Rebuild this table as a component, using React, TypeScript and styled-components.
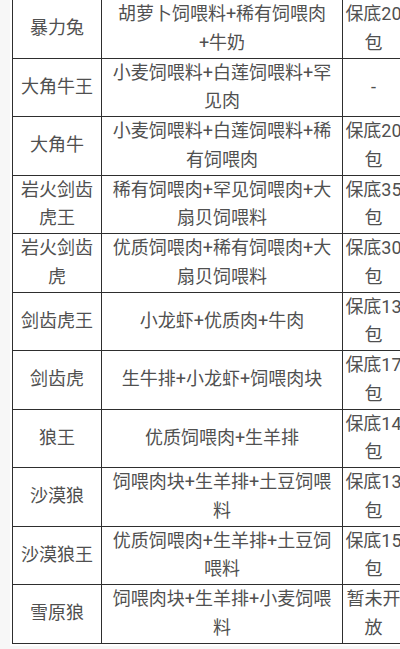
import React from "react";
import styled, { createGlobalStyle } from "styled-components";

type Row = {
  name: string;
  food: string;
  reward: string;
};

const rows: Row[] = [
  { name: "暴力兔", food: "胡萝卜饲喂料+稀有饲喂肉+牛奶", reward: "保底20包" },
  { name: "大角牛王", food: "小麦饲喂料+白莲饲喂料+罕见肉", reward: "-" },
  { name: "大角牛", food: "小麦饲喂料+白莲饲喂料+稀有饲喂肉", reward: "保底20包" },
  { name: "岩火剑齿虎王", food: "稀有饲喂肉+罕见饲喂肉+大扇贝饲喂料", reward: "保底35包" },
  { name: "岩火剑齿虎", food: "优质饲喂肉+稀有饲喂肉+大扇贝饲喂料", reward: "保底30包" },
  { name: "剑齿虎王", food: "小龙虾+优质肉+牛肉", reward: "保底13包" },
  { name: "剑齿虎", food: "生牛排+小龙虾+饲喂肉块", reward: "保底17包" },
  { name: "狼王", food: "优质饲喂肉+生羊排", reward: "保底14包" },
  { name: "沙漠狼", food: "饲喂肉块+生羊排+土豆饲喂料", reward: "保底13包" },
  { name: "沙漠狼王", food: "优质饲喂肉+生羊排+土豆饲喂料", reward: "保底15包" },
  { name: "雪原狼", food: "饲喂肉块+生羊排+小麦饲喂料", reward: "暂未开放" },
];

const GlobalStyle = createGlobalStyle`
  html, body {
    margin: 0;
    padding: 0;
    background: #f7f7f7;
    overflow: hidden;
  }
`;

const Page = styled.div`
  width: 400px;
  height: 649px;
  overflow: hidden;
  padding-left: 10px;
  box-sizing: border-box;
`;

const Sheet = styled.div`
  background: #ffffff;
  width: 400px;
  margin-top: -1px;
  padding: 0 0 2px 2px;
`;

const Table = styled.table`
  border-collapse: collapse;
  table-layout: fixed;
  width: 392px;
  font-family: Roboto, "Noto Sans CJK SC", sans-serif;
  font-size: 18px;
  color: #505050;
`;

const Cell = styled.td<{ $pad: number }>`
  border: 1px solid #2e2e2e;
  padding: 0 ${(p) => p.$pad}px;
  text-align: center;
  vertical-align: middle;
  line-height: 28.75px;
  height: 57.5px;
`;

export default function App() {
  return (
    <>
      <GlobalStyle />
      <Page>
        <Sheet>
          <Table>
            <colgroup>
              <col style={{ width: 89 }} />
              <col style={{ width: 241 }} />
              <col style={{ width: 62 }} />
            </colgroup>
            <tbody>
              {rows.map((r) => (
                <tr key={r.name}>
                  <Cell $pad={5}>{r.name}</Cell>
                  <Cell $pad={5}>{r.food}</Cell>
                  <Cell $pad={1}>{r.reward}</Cell>
                </tr>
              ))}
            </tbody>
          </Table>
        </Sheet>
      </Page>
    </>
  );
}
